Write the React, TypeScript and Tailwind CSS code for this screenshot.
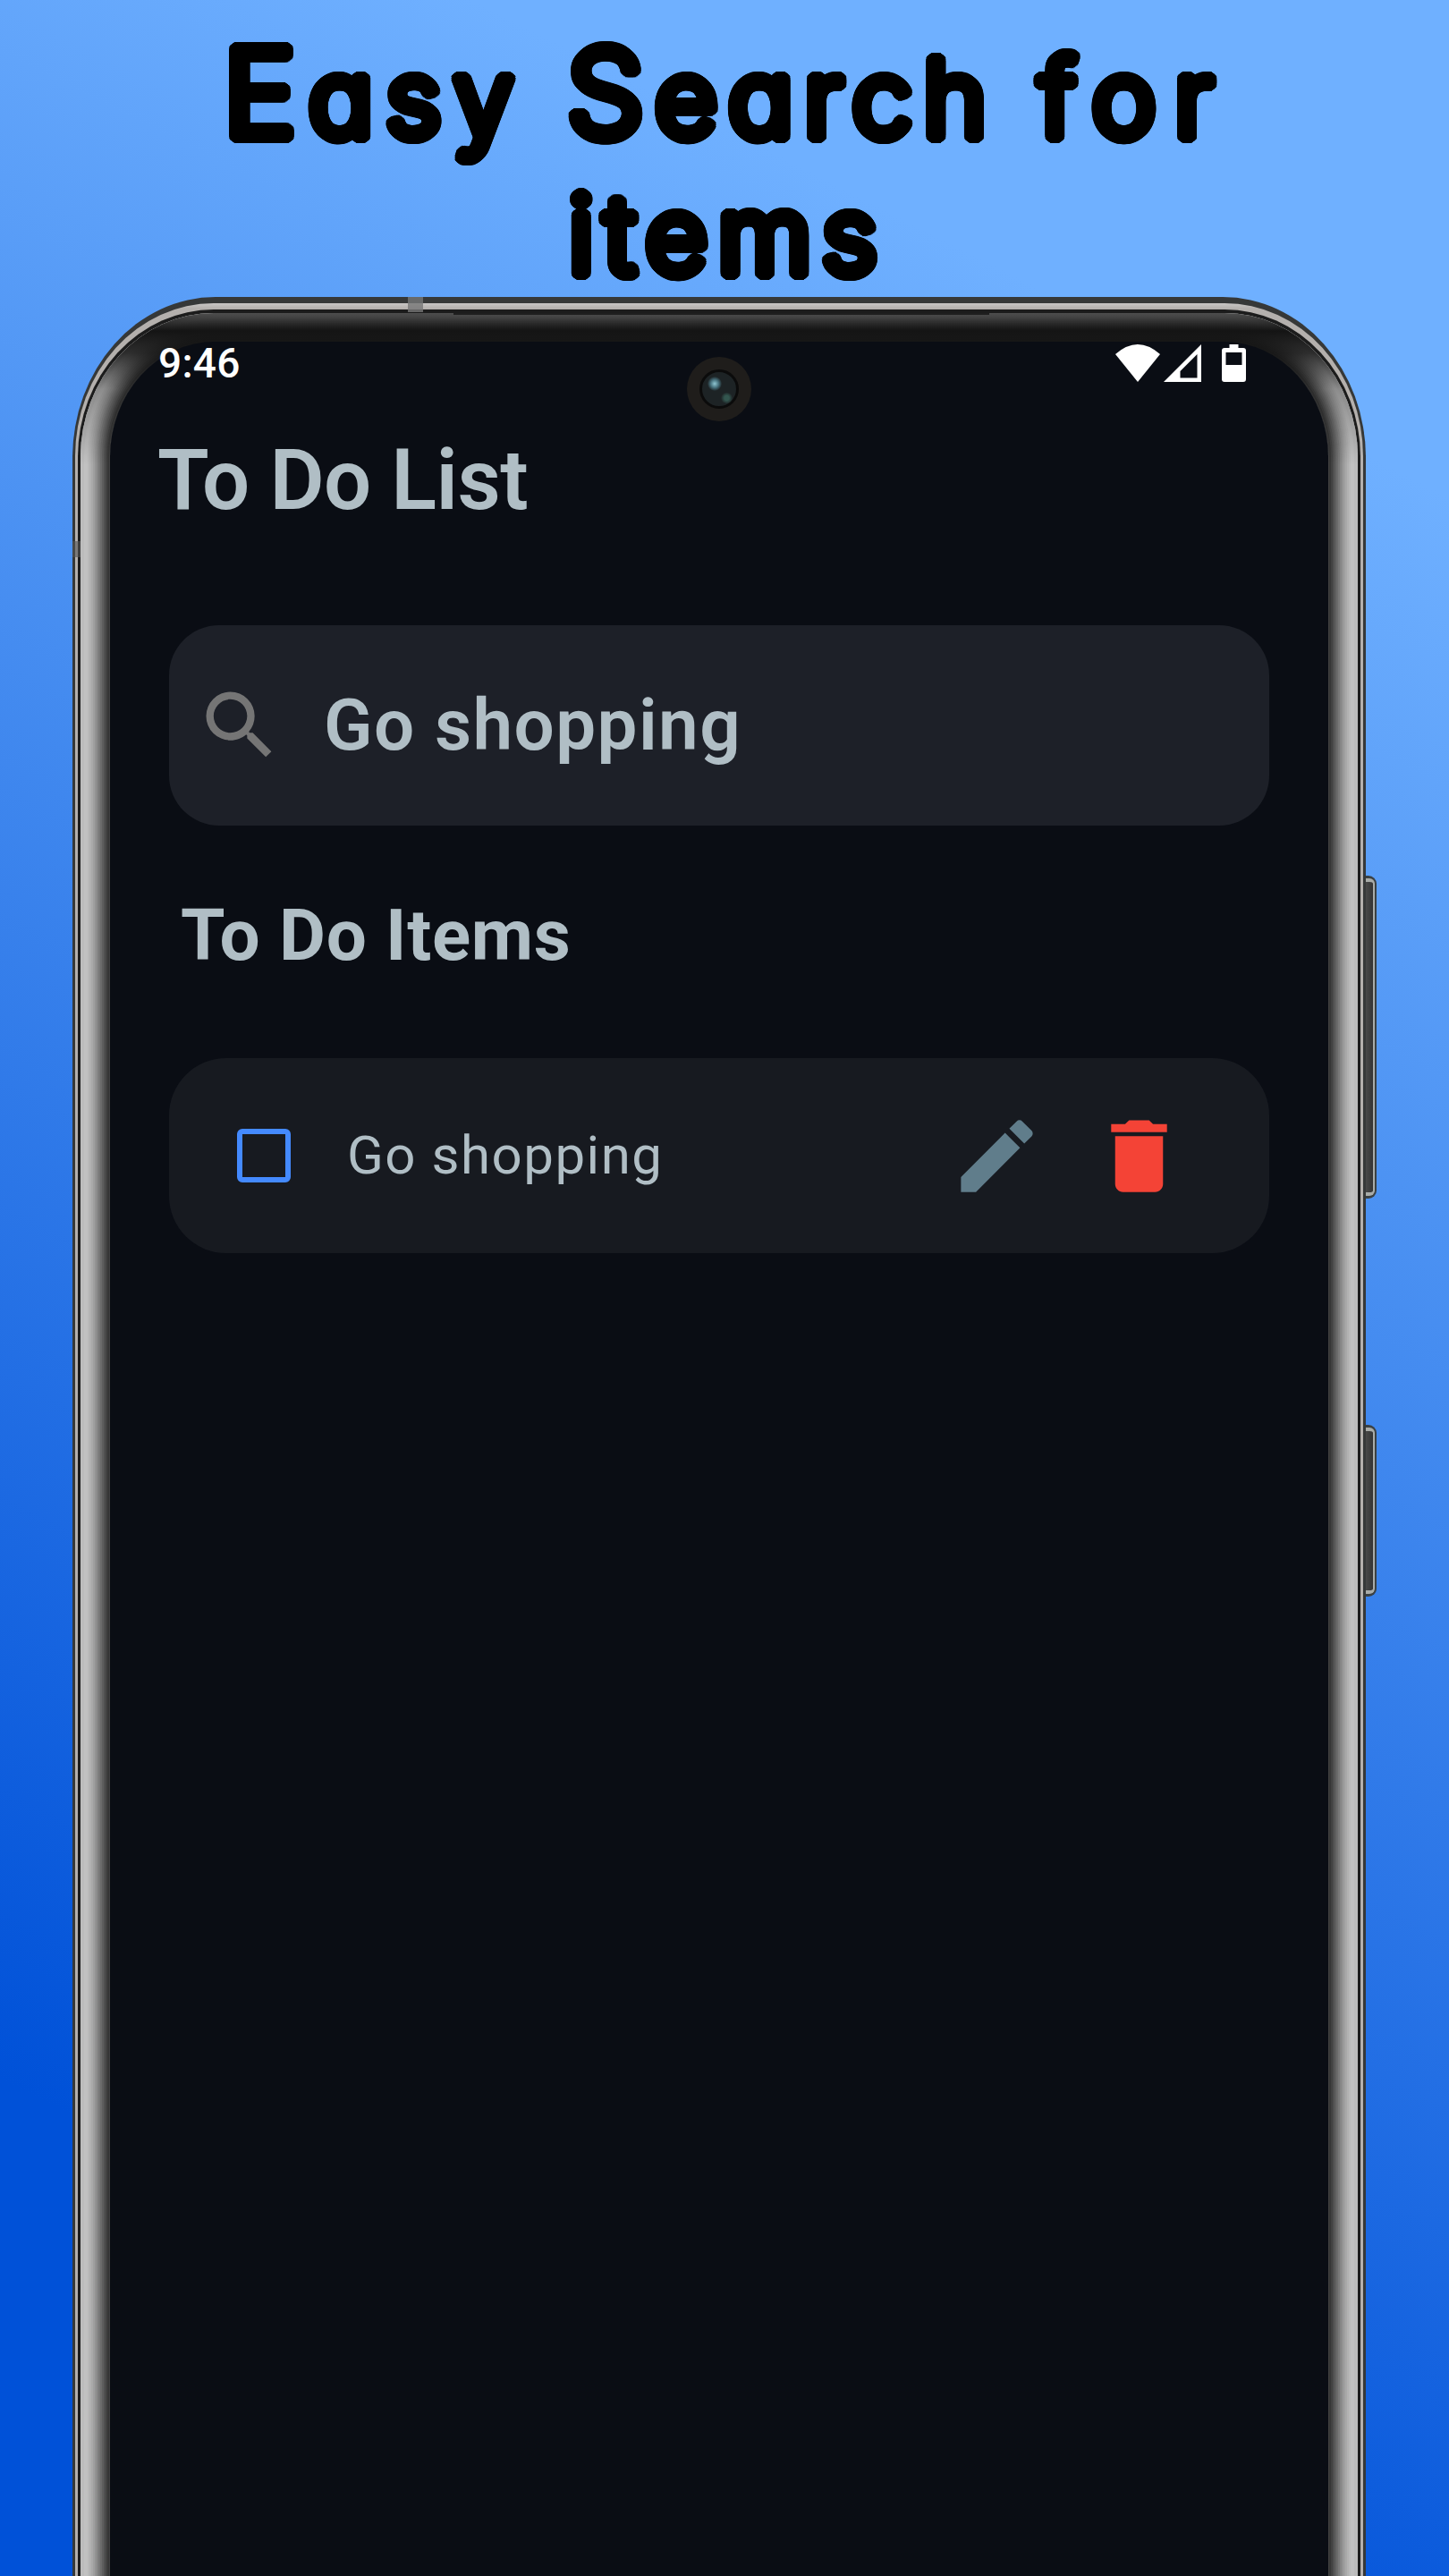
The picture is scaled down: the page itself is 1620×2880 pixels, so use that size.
import { MdSearch, MdEdit, MdDelete } from "react-icons/md";

// Zero-blur copies on a circle give the thin letters round, even strokes.
const brush = Array.from({ length: 28 }, (_, i) => {
  const a = (i * Math.PI) / 14;
  return `${(Math.cos(a) * 7).toFixed(2)}px ${(Math.sin(a) * 7).toFixed(2)}px 0 #000`;
}).join(", ");

// Metallic bevel: grey level at each distance from the display edge.
const levels: [number, string][] = [
  [1, "#404040"], [3, "#363636"], [5, "#424242"], [7, "#505050"], [9, "#5e5e5e"],
  [11, "#6b6b6b"], [13, "#787878"], [15, "#868686"], [17, "#939393"], [19, "#9f9f9f"],
  [21, "#a9a9a9"], [23, "#b2b2b2"], [25, "#bababa"], [29, "#c1c1c1"], [34, "#bcbcbc"],
];
const bevel = levels.map(([s, c]) => `0 0 0 ${s}px ${c}`).join(", ");

function SideKey({ className }: { className: string }) {
  return (
    <div className={`absolute left-[1526px] w-[13px] rounded-r-[9px] border-y-[3px] border-r-2 border-[#3b4143] bg-[#3b4143] ${className}`}>
      <div className="h-full w-full rounded-r-[6px] border-y-[4px] border-r-2 border-[#a9aca9] bg-linear-to-r from-[#4c4c4c] to-[#343434]" />
    </div>
  );
}

function StatusBar() {
  return (
    <div className="flex h-[48px] items-center justify-between pl-[54px] pr-[92px] text-white">
      <span className="text-[46px] font-medium leading-[48px] tracking-[0.3px]">9:46</span>
      <div className="flex h-[42px]">
        <svg width="50" height="42" viewBox="0 0 50 42" fill="currentColor">
          <path d="M0 11Q25 -11 50 11L25 42Z" />
        </svg>
        <svg className="ml-[4px]" width="42" height="42" viewBox="0 0 42 42" fill="currentColor">
          <path fillRule="evenodd" d="M42 0V42H0ZM37.500 11L18.500 30V37.500H37.500Z" />
        </svg>
        <svg className="ml-[23px]" width="27" height="42" viewBox="0 0 27 42" fill="currentColor">
          <path fillRule="evenodd" d="M8.500 0H18.500V4H24Q27 4 27 7V39Q27 42 24 42H3Q0 42 0 39V7Q0 4 3 4H8.500ZM4.500 9V23H22.500V9Z" />
        </svg>
      </div>
    </div>
  );
}

export default function App() {
  return (
    <div className="relative h-[2880px] w-[1620px] overflow-hidden bg-[linear-gradient(207deg,#6fb0ff_15%,#0051d8_85%)] font-[Roboto,sans-serif]">
      <h1
        className="flex h-[332px] flex-col pt-[26px] font-[Inter,sans-serif] text-[120px] font-light leading-[156px] text-black [font-feature-settings:'cv11']"
        style={{ textShadow: brush }}
      >
        <span className="ml-[250px] flex items-baseline gap-[46px] whitespace-nowrap">
          <span className="tracking-[14px]"><span className="text-[136px]">E</span>asy</span>
          <span className="tracking-[12.5px]"><span className="text-[136px]">S</span>earch</span>
          <span className="tracking-[21px]">for</span>
        </span>
        <span className="-mt-[3px] pl-[8px] text-center tracking-[11.5px]">items</span>
      </h1>

      <SideKey className="top-[979px] h-[361px]" />
      <SideKey className="top-[1593px] h-[192px]" />

      <div className="relative ml-[81px] h-[2700px] w-[1446px] rounded-t-[160px_180px] bg-[#363838] px-[3px] pt-[7px]">
        <div className="h-full rounded-t-[155px_171px] bg-[linear-gradient(180deg,#c9c6c5_0px,#b4b0ad_6px)] px-[3px] pt-[7px]">
          <div className="h-full rounded-t-[152px_165px] bg-[#1c1c1c] px-[3px] pt-[4px]">
            <div className="relative h-full overflow-hidden rounded-t-[149px_161px] bg-[#bcbcbc] px-[33px] pt-[32px]">
              <div className="h-full rounded-t-[117px_129px]" style={{ boxShadow: bevel }} />
              <div className="absolute inset-0 bg-[linear-gradient(180deg,rgba(20,20,20,0.65)_0px,rgba(20,20,20,1)_20px,rgba(20,20,20,0.85)_45px,rgba(20,20,20,0.3)_85px,rgba(20,20,20,0)_170px)]" />
              <div className="absolute left-[417px] top-0 h-[2px] w-[599px] bg-[#1f1f1f]" />
              <main className="absolute inset-x-[33px] bottom-0 top-[32px] flex flex-col rounded-t-[117px_129px] bg-[#0a0d14] text-[#b0bec5]">
                <StatusBar />
                <h2 className="mt-[52px] pl-[53px] text-[94px] font-semibold leading-[110px] tracking-[-0.6px]">To Do List</h2>
                <label className="mx-[66px] mt-[107px] flex h-[224px] items-center rounded-[56px] bg-[#1d2028] pl-[29px]">
                  <MdSearch size={100} color="#757575" />
                  <span className="ml-[44px] text-[80px] font-semibold leading-none tracking-[1.4px]">Go shopping</span>
                </label>
                <h3 className="mt-[76px] pl-[79px] text-[80px] font-bold leading-[94px] tracking-[0.7px]">To Do Items</h3>
                <div className="mx-[66px] mt-[90px] flex h-[218px] items-center rounded-[64px] bg-[#171a20] pl-[76px] pr-[92px]">
                  <span className="size-[60px] rounded-[6px] border-[6.500px] border-[#448aff]" />
                  <span className="ml-[63px] text-[60px] leading-none tracking-[1.5px]">Go shopping</span>
                  <MdEdit className="ml-auto" size={107} color="#607d8b" />
                  <MdDelete className="ml-[52px]" size={107} color="#f44336" />
                </div>
              </main>
            </div>
          </div>
        </div>
        <div className="absolute left-[375px] top-0 h-[17px] w-[17px] bg-[#777]/80" />
        <div className="absolute left-0 top-[273px] h-[18px] w-[9px] bg-[#555]/60" />
        <div className="absolute left-[687px] top-[67px] flex size-[72px] items-center justify-center rounded-full bg-[#1f1d1b]">
          <div className="relative size-[44px] rounded-full border-[3px] border-[#0b0b0b] bg-[#1d2325]">
            <div className="absolute left-[6px] top-[5px] size-[16px] rounded-full bg-[radial-gradient(circle,#8fc6d2_0%,#46707c_40%,transparent_72%)]" />
            <div className="absolute bottom-[3px] right-[4px] h-[12px] w-[13px] rounded-full bg-[radial-gradient(circle,#33564f_30%,transparent_75%)]" />
          </div>
        </div>
      </div>
    </div>
  );
}
